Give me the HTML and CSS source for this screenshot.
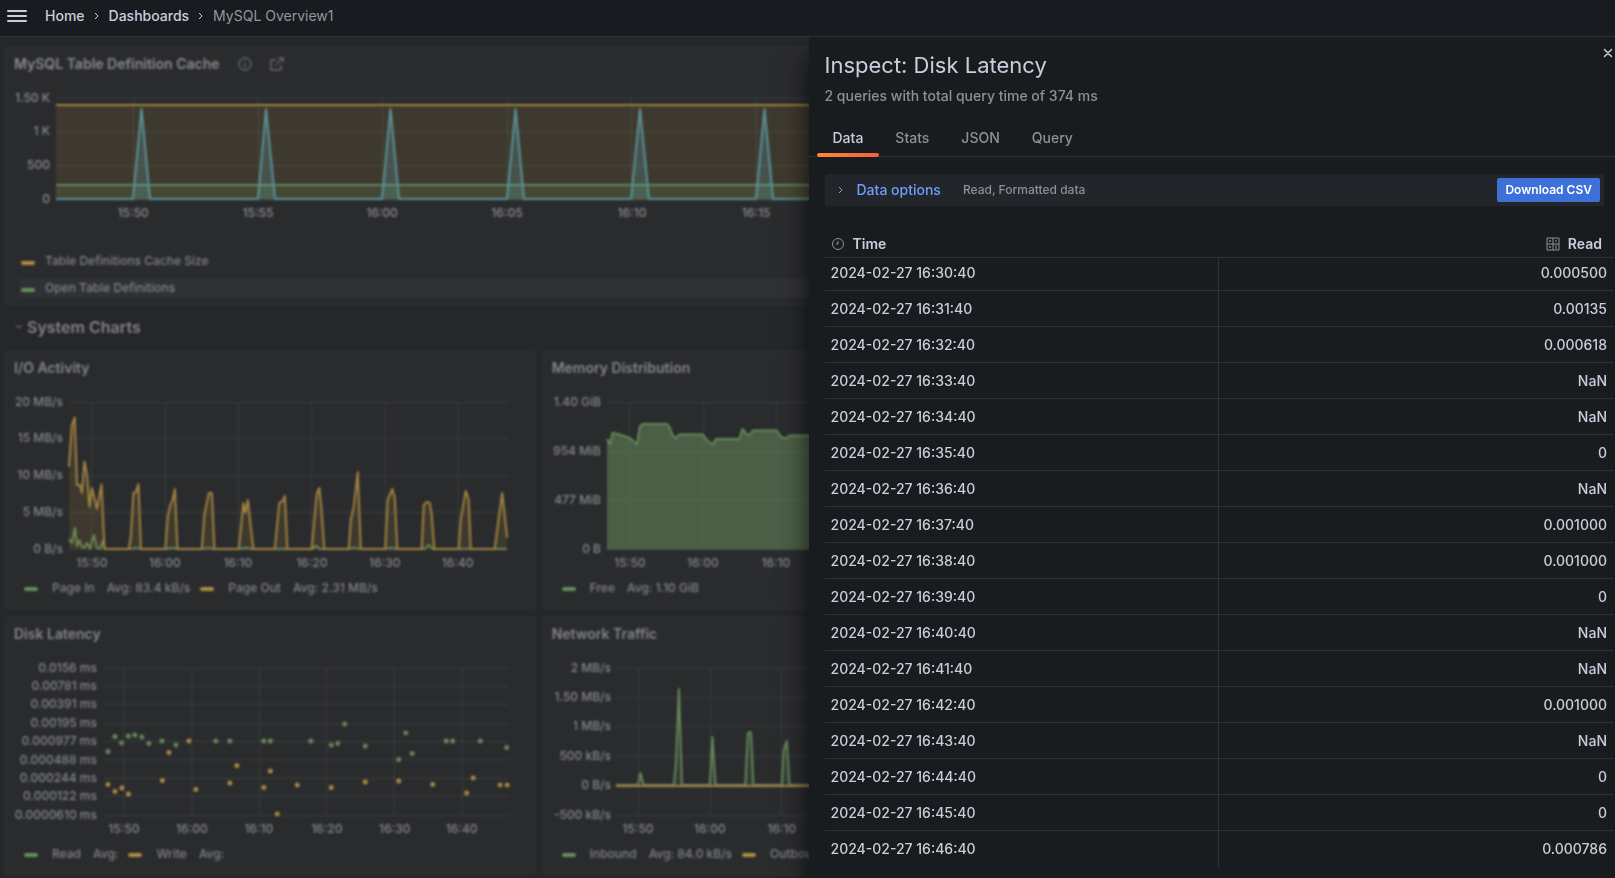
FILE: index.html
```html
<!DOCTYPE html>
<html lang="en">
<head>
<meta charset="utf-8">
<title>MySQL Overview1</title>
<link rel="stylesheet" href="styles.css">
</head>
<body>
<header class="topbar">
  <button class="menu" type="button" aria-label="Menu">
    <svg width="20" height="12" viewBox="0 0 20 12"><path d="M1 1h18M1 6h18M1 11h18" stroke="currentColor" stroke-width="2" stroke-linecap="round"/></svg>
  </button>
  <nav class="crumbs" aria-label="Breadcrumb">
    <a href="#">Home</a>
    <svg width="6" height="8" viewBox="0 0 6 8"><path d="M1 1l3 3-3 3" class="chev"/></svg>
    <a href="#">Dashboards</a>
    <svg width="6" height="8" viewBox="0 0 6 8"><path d="M1 1l3 3-3 3" class="chev"/></svg>
    <span class="current">MySQL Overview1</span>
  </nav>
</header>

<main class="stage">
  <div class="dashboard">
    <section class="panel wide">
      <div class="panel-head">
        <h2>MySQL Table Definition Cache</h2>
        <svg width="14" height="14" viewBox="0 0 14 14"><circle cx="7" cy="7" r="6" class="ico"/><path d="M7 6.500v3.500M7 4v1" class="ico"/></svg>
        <svg width="14" height="14" viewBox="0 0 14 14"><path d="M6 3H1v10h10V8M5.500 8.500L13 1M8.500 1H13v4.500" class="ico"/></svg>
      </div>
      <svg class="chart" viewBox="6 82 1603 140">
        <path class="grid" d="M56 98.500H1595M56 131.500H1595M56 165.500H1595M56 199.500H1595M133.500 98V199M258.500 98V199M382.500 98V199M507.500 98V199M631.500 98V199M756.500 98V199"/>
        <path class="area-y" d="M56 105H1595V200H56z"/>
        <path class="area-g" d="M56 185H1595V200H56z"/>
        <path class="line-y" d="M56 105H1595"/>
        <path class="line-g" d="M56 185H1595"/>
        <path class="area-b" d="M133 199L141.500 109L150 199zM258 199L266 109L275 199zM382 199L390.500 109L399 199zM507 199L515.500 109L524 199zM631 199L640 109L649 199zM756 199L764.500 109L773 199z"/>
        <path class="line-b" d="M56 199H133L141.500 109L150 199H258L266 109L275 199H382L390.500 109L399 199H507L515.500 109L524 199H631L640 109L649 199H756L764.500 109L773 199H1595"/>
        <g class="ylab"><text x="50" y="102">1.50 K</text><text x="50" y="135">1 K</text><text x="50" y="169">500</text><text x="50" y="203">0</text></g>
        <g class="xlab"><text x="133" y="217">15:50</text><text x="258" y="217">15:55</text><text x="382" y="217">16:00</text><text x="507" y="217">16:05</text><text x="632" y="217">16:10</text><text x="756" y="217">16:15</text></g>
      </svg>
      <ul class="legend-list">
        <li><i class="swatch yellow"></i>Table Definitions Cache Size</li>
        <li class="hover"><i class="swatch green"></i>Open Table Definitions</li>
      </ul>
    </section>

    <h1 class="row-title"><svg width="8" height="6" viewBox="0 0 8 6"><path d="M1 1l3 3 3-3" class="chev"/></svg>System Charts</h1>

    <section class="panel">
      <div class="panel-head"><h2>I/O Activity</h2></div>
      <svg class="chart" viewBox="6 386 528 186">
        <path class="grid" d="M69 402.500H509M69 438.500H509M69 475.500H509M69 512.500H509M69 549.500H509M91.500 402V549M165.500 402V549M238.500 402V549M311.500 402V549M385.500 402V549M458.500 402V549"/>
        <path class="line-g" d="M69 539L72 543L75 528L77 546L79.500 540.500L82 547L84.500 548L87 543L90 549L94 535L97 548L100 549L103 541L105 549H130L136 548L141 549H166L172 548L178 549H202L208 548L214 549H239L246 548L253 549H312L316.500 546L320 549H349L354 548L361 549H385L391 548L397 549H425L429 545L433 549H507"/>
        <path class="area-y" d="M69 549L69 467L72 425L74.700 417.500L77 485L80 485L82 493L84.500 461.500L87 475L89.500 507L92 488L97 509L101.500 484.500L104.500 549H129L131 536L133.500 493.500L136 492L138.500 484L141 549H165.500L168 516L170.500 505L172.500 501L175 489L177.500 549H202L204.500 515L209 493H212L214.500 549H239L243.500 503L245.500 513L248 500L251 528L253.500 549H275L279.500 503L283 501L285 496L287.500 549H312L315 515L317 494L319.500 488L321.500 508L324.500 549H349L351 520L354 507L358 472L361 549H385.500L388 500L392.500 489L395 498L397.500 549H422L424 505L427 502L430 503L432 515L434.500 549H459L461 520L466 491L469 500L471 549H495L502.500 493L507.500 538V549z"/>
        <path class="line-y" d="M69 467L72 425L74.700 417.500L77 485L80 485L82 493L84.500 461.500L87 475L89.500 507L92 488L97 509L101.500 484.500L104.500 549H129L131 536L133.500 493.500L136 492L138.500 484L141 549H165.500L168 516L170.500 505L172.500 501L175 489L177.500 549H202L204.500 515L209 493H212L214.500 549H239L243.500 503L245.500 513L248 500L251 528L253.500 549H275L279.500 503L283 501L285 496L287.500 549H312L315 515L317 494L319.500 488L321.500 508L324.500 549H349L351 520L354 507L358 472L361 549H385.500L388 500L392.500 489L395 498L397.500 549H422L424 505L427 502L430 503L432 515L434.500 549H459L461 520L466 491L469 500L471 549H495L502.500 493L507.500 538"/>
        <g class="ylab"><text x="63" y="406">20 MB/s</text><text x="63" y="442">15 MB/s</text><text x="63" y="479">10 MB/s</text><text x="63" y="516">5 MB/s</text><text x="63" y="553">0 B/s</text></g>
        <g class="xlab"><text x="92" y="567">15:50</text><text x="165" y="567">16:00</text><text x="238" y="567">16:10</text><text x="312" y="567">16:20</text><text x="385" y="567">16:30</text><text x="458" y="567">16:40</text></g>
      </svg>
      <div class="legend">
        <span class="key"><i class="swatch green"></i>Page In</span><span class="avg">Avg: 83.4 kB/s</span>
        <span class="key"><i class="swatch yellow"></i>Page Out</span><span class="avg">Avg: 2.31 MB/s</span>
      </div>
    </section>

    <section class="panel second">
      <div class="panel-head"><h2>Memory Distribution</h2></div>
      <svg class="chart" viewBox="544 386 528 186">
        <path class="grid" d="M607 402.500H1047M607 451.500H1047M607 500.500H1047M607 549.500H1047M629.500 402V549M703.500 402V549M776.500 402V549"/>
        <path class="area-mem" d="M607 549.500V439L610 444L612.500 433L618 434L630 438L637 444.500L640 426L643 424H667L670 428L672 434L676 439L679 434.500H703L707 440L713 445L716 439H739.500L742.500 429L747 434.500L750 435L753 430.500H777L781 437L786 438.500L790 435.500H1047V549.500z"/>
        <path class="line-g" d="M607 439L610 444L612.500 433L618 434L630 438L637 444.500L640 426L643 424H667L670 428L672 434L676 439L679 434.500H703L707 440L713 445L716 439H739.500L742.500 429L747 434.500L750 435L753 430.500H777L781 437L786 438.500L790 435.500H1047"/>
        <g class="ylab"><text x="601" y="406">1.40 GiB</text><text x="601" y="455">954 MiB</text><text x="601" y="504">477 MiB</text><text x="601" y="553">0 B</text></g>
        <g class="xlab"><text x="630" y="567">15:50</text><text x="703" y="567">16:00</text><text x="776" y="567">16:10</text></g>
      </svg>
      <div class="legend"><span class="key"><i class="swatch green"></i>Free</span><span class="avg">Avg: 1.10 GiB</span></div>
    </section>

    <section class="panel">
      <div class="panel-head"><h2>Disk Latency</h2></div>
      <svg class="chart" viewBox="6 652 528 186">
        <path class="grid" d="M104 668.500H509M104 686.500H509M104 704.500H509M104 723.500H509M104 741.500H509M104 759.500H509M104 778.500H509M104 796.500H509M104 815.500H509M123.500 668V815M191.500 668V815M259.500 668V815M326.500 668V815M394.500 668V815M462.500 668V815"/>
        <path class="dots-g" d="M108 751.500h0M115 736.500h0M121.500 743h0M128.500 736h0M135 735h0M142 737h0M149 743.500h0M162 741h0M176 745h0M216 741h0M230 741h0M264 741h0M270.500 741h0M311 741h0M331.500 745h0M338 743.500h0M345 724h0M365.500 746h0M399 759.500h0M406 733h0M412.500 753.500h0M446.500 741h0M453 741h0M480.500 741h0M507 747.500h0"/>
        <path class="dots-y" d="M108 784.500h0M115 791.500h0M122 788h0M128.500 794h0M162.500 780.500h0M169 752.500h0M189 741h0M196 789.500h0M230 783h0M237 765.500h0M264 787.500h0M270.500 771h0M277.500 814h0M297.500 785h0M331.500 787.500h0M365.500 782h0M399 781h0M433 784.500h0M467 793h0M473.500 778h0M500.500 785h0M507.500 785h0"/>
        <g class="ylab"><text x="97" y="672">0.0156 ms</text><text x="97" y="690">0.00781 ms</text><text x="97" y="708">0.00391 ms</text><text x="97" y="727">0.00195 ms</text><text x="97" y="745">0.000977 ms</text><text x="97" y="764">0.000488 ms</text><text x="97" y="782">0.000244 ms</text><text x="97" y="800">0.000122 ms</text><text x="97" y="819">0.0000610 ms</text></g>
        <g class="xlab"><text x="124" y="833">15:50</text><text x="192" y="833">16:00</text><text x="259" y="833">16:10</text><text x="327" y="833">16:20</text><text x="395" y="833">16:30</text><text x="462" y="833">16:40</text></g>
      </svg>
      <div class="legend">
        <span class="key"><i class="swatch green"></i>Read</span><span class="avg">Avg:</span>
        <span class="key"><i class="swatch yellow"></i>Write</span><span class="avg">Avg:</span>
      </div>
    </section>

    <section class="panel second">
      <div class="panel-head"><h2>Network Traffic</h2></div>
      <svg class="chart" viewBox="544 652 528 186">
        <path class="grid" d="M616 668.500H1047M616 697.500H1047M616 726.500H1047M616 756.500H1047M616 785.500H1047M616 815.500H1047M638.500 668V815M710.500 668V815M781.500 668V815"/>
        <path class="area-g" d="M638 785L640.500 773L643.500 785zM674 785L676 764L679 689L682 785zM710 785L712.500 737L715.500 785zM745.500 785L748 733L751 732L753.500 785zM782 785L784 750L787 741L789.500 785z"/>
        <path class="line-g" d="M616 785H638L640.500 773L643.500 785H674L676 764L679 689L682 785H710L712.500 737L715.500 785H745.500L748 733L751 732L753.500 785H782L784 750L787 741L789.500 785H1047"/>
        <path class="line-y" d="M616 786H1047"/>
        <g class="ylab"><text x="611" y="672">2 MB/s</text><text x="611" y="701">1.50 MB/s</text><text x="611" y="730">1 MB/s</text><text x="611" y="760">500 kB/s</text><text x="611" y="789">0 B/s</text><text x="611" y="819">-500 kB/s</text></g>
        <g class="xlab"><text x="638" y="833">15:50</text><text x="710" y="833">16:00</text><text x="782" y="833">16:10</text></g>
      </svg>
      <div class="legend">
        <span class="key"><i class="swatch green"></i>Inbound</span><span class="avg">Avg: 84.0 kB/s</span>
        <span class="key"><i class="swatch yellow"></i>Outbound</span>
      </div>
    </section>
  </div>

  <aside class="drawer" aria-labelledby="drawer-title">
    <button class="close" type="button" aria-label="Close"><svg width="10" height="10" viewBox="0 0 10 10"><path d="M1.500 1.500l7 7M8.500 1.500l-7 7" stroke="currentColor" stroke-width="1.500" stroke-linecap="round"/></svg></button>
    <h2 class="title" id="drawer-title">Inspect: Disk Latency</h2>
    <p class="subtitle">2 queries with total query time of 374 ms</p>
    <div class="tabs" role="tablist">
      <button class="tab active" type="button" role="tab" aria-selected="true">Data</button>
      <button class="tab" type="button" role="tab">Stats</button>
      <button class="tab" type="button" role="tab">JSON</button>
      <button class="tab" type="button" role="tab">Query</button>
    </div>
    <div class="options">
      <button class="toggle" type="button"><svg width="6" height="8" viewBox="0 0 6 8"><path d="M1 1l3 3-3 3" class="chev"/></svg>Data options</button>
      <span class="summary">Read, Formatted data</span>
      <button class="download" type="button">Download CSV</button>
    </div>
    <table class="data">
      <thead>
        <tr>
          <th scope="col"><span class="th"><svg width="14" height="14" viewBox="0 0 14 14"><circle cx="7" cy="7" r="5.500" class="ico"/><path d="M7 4v3H5" class="ico"/></svg>Time</span></th>
          <th scope="col"><span class="th end"><svg width="14" height="14" viewBox="0 0 14 14"><path d="M1 1h12v12H1zM7 1v12M1 7h12M3 4h2M4 3v2M9 4h2M3.300 9.300l1.400 1.400M4.700 9.300l-1.400 1.400M9 9h2M9 11h2" class="ico"/></svg>Read</span></th>
        </tr>
      </thead>
      <tbody>
        <tr><td>2024-02-27 16:30:40</td><td>0.000500</td></tr>
        <tr><td>2024-02-27 16:31:40</td><td>0.00135</td></tr>
        <tr><td>2024-02-27 16:32:40</td><td>0.000618</td></tr>
        <tr><td>2024-02-27 16:33:40</td><td>NaN</td></tr>
        <tr><td>2024-02-27 16:34:40</td><td>NaN</td></tr>
        <tr><td>2024-02-27 16:35:40</td><td>0</td></tr>
        <tr><td>2024-02-27 16:36:40</td><td>NaN</td></tr>
        <tr><td>2024-02-27 16:37:40</td><td>0.001000</td></tr>
        <tr><td>2024-02-27 16:38:40</td><td>0.001000</td></tr>
        <tr><td>2024-02-27 16:39:40</td><td>0</td></tr>
        <tr><td>2024-02-27 16:40:40</td><td>NaN</td></tr>
        <tr><td>2024-02-27 16:41:40</td><td>NaN</td></tr>
        <tr><td>2024-02-27 16:42:40</td><td>0.001000</td></tr>
        <tr><td>2024-02-27 16:43:40</td><td>NaN</td></tr>
        <tr><td>2024-02-27 16:44:40</td><td>0</td></tr>
        <tr><td>2024-02-27 16:45:40</td><td>0</td></tr>
        <tr><td>2024-02-27 16:46:40</td><td>0.000786</td></tr>
      </tbody>
    </table>
  </aside>
</main>
</body>
</html>
```

FILE: styles.css
```css
* { box-sizing: border-box; }

body {
  margin: 0;
  height: 100vh;
  display: flex;
  flex-direction: column;
  overflow: hidden;
  background: #262729;
  color: #ccccdc;
  font: 14px/22px Inter, "Liberation Sans", sans-serif;
}

button {
  padding: 0;
  border: 0;
  background: none;
  color: inherit;
  font: inherit;
  cursor: pointer;
}

h1, h2, p, ul { margin: 0; padding: 0; }
svg { display: block; fill: none; }
.chev, .ico { stroke: currentColor; fill: none; }

/* Top bar */
.topbar {
  flex: none;
  display: flex;
  align-items: center;
  gap: 18px;
  padding: 0 7px 4px;
  height: 37px;
  background: #181b1f;
  border-bottom: 1px solid #2e3034;
  position: relative;
  z-index: 2;
}
.crumbs { display: flex; align-items: center; gap: 9px; font-weight: 500; }
.crumbs a { color: #ccccdc; text-decoration: none; }
.crumbs .current { color: #96969f; font-weight: 400; }

/* Dashboard behind the drawer */
.stage { flex: 1; min-height: 0; position: relative; overflow: hidden; }
.dashboard {
  display: grid;
  grid-template-columns: repeat(3, minmax(0, 1fr));
  gap: 8px;
  padding: 10px 5px;
  color: #838489;
  filter: blur(1px);
}
.panel { background: #2a2b2d; border: 1px solid #303133; border-radius: 2px; grid-column: 1; }
.panel.second { grid-column: 2; }
.panel.wide { grid-column: 1 / -1; }
.panel-head { display: flex; align-items: center; gap: 18px; height: 34px; padding: 0 8px 2px; color: #85868b; }
.panel-head h2 { font-size: 14px; line-height: 22px; font-weight: 600; }
.row-title {
  grid-column: 1 / -1;
  display: flex;
  align-items: center;
  gap: 4px;
  height: 30px;
  padding: 0 0 2px 10px;
  font-size: 16px;
  font-weight: 600;
}

.chart { width: 100%; height: auto; }
.chart text { font-size: 12px; fill: #86878c; font-weight: 500; }
.ylab { text-anchor: end; }
.xlab { text-anchor: middle; }
.grid { stroke: #3c3d3f; }
.area-y { fill: #b48a34; fill-opacity: .15; }
.area-g { fill: #73a35f; fill-opacity: .15; }
.area-b { fill: #5fa3ab; fill-opacity: .25; }
.area-mem { fill: #6c925f; fill-opacity: .5; }
.line-y, .line-g, .line-b { stroke-width: 2; stroke-linejoin: round; }
.line-y { stroke: #a38340; }
.line-g { stroke: #64885a; }
.line-b { stroke: #5b929a; }
.dots-g, .dots-y { stroke-width: 5; stroke-linecap: round; }
.dots-g { stroke: #64885a; }
.dots-y { stroke: #a98843; }

.swatch { flex: none; width: 14px; height: 4px; margin-top: 3px; border-radius: 2px; }
.swatch.green { background: #668f5b; }
.swatch.yellow { background: #b08d42; }
.legend {
  display: flex;
  align-items: center;
  height: 36px;
  padding: 0 0 4px 18px;
  font-size: 12px;
  font-weight: 500;
}
.key { display: flex; align-items: center; gap: 14px; margin-right: 12px; }
.avg { margin-right: 10px; }
.legend-list {
  display: grid;
  gap: 7px;
  padding: 29px 8px 6px 13px;
  list-style: none;
  font-size: 12px;
  font-weight: 500;
  line-height: 20px;
}
.legend-list li { display: flex; align-items: center; gap: 10px; padding-left: 2px; }
.legend-list .hover { background: #303135; }

/* Inspect drawer */
.drawer {
  position: absolute;
  top: 0;
  right: 0;
  bottom: 0;
  width: calc(50% - 1px);
  padding: 15px 2px 0 16px;
  background: #191c1f;
  box-shadow: 0 20px 24px rgba(0, 0, 0, .75);
}
.close { position: absolute; top: 11px; right: 2px; }
.title { font-size: 22px; line-height: 26px; font-weight: 400; }
.subtitle { margin-top: 7px; color: #8e8f99; font-weight: 500; }
.tabs {
  display: flex;
  margin: 14px -2px 0 -16px;
  padding-left: 8px;
  border-bottom: 1px solid #2f3236;
}
.tab { position: relative; padding: 6px 16px 8px; height: 35px; color: #8e8f99; font-weight: 500; }
.tab.active { color: #ccccdc; }
.tab.active::after {
  content: "";
  position: absolute;
  left: 0;
  right: 0;
  bottom: -1px;
  height: 4px;
  border-radius: 2px;
  background: linear-gradient(90deg, #ff8833, #f55f3e);
}
.options {
  display: flex;
  align-items: center;
  height: 32px;
  margin: 17px 9px 20px 0;
  padding: 0 4px 0 13px;
  border-radius: 2px;
  background: #22252a;
}
.toggle { display: flex; align-items: center; gap: 13px; color: #6e9fff; font-weight: 500; }
.toggle svg { color: #9c9ca8; }
.summary { margin-left: 22px; font-size: 12px; font-weight: 500; color: #8e8f99; }
.download {
  height: 24px;
  margin-left: auto;
  padding: 0 8px;
  border-radius: 2px;
  background: #3d71d9;
  color: #fff;
  font-size: 12px;
  font-weight: 600;
}

.data { width: 100%; table-layout: fixed; border-collapse: separate; border-spacing: 0; }
.data th { height: 32px; padding: 4px 11px 0 6px; border-bottom: 1px solid #303336; font-weight: 600; }
.th { display: flex; align-items: center; gap: 8px; }
.th.end { justify-content: flex-end; }
.th svg { color: #8e8f99; }
.data td { height: 36px; padding: 0 6px; border-bottom: 1px solid #303336; font-weight: 500; }
.data td:first-child { border-right: 1px solid #303336; }
.data td:last-child { text-align: right; }
.data tbody tr:first-child td { height: 33px; padding-bottom: 3px; }
.data tbody tr:last-child td { border-bottom: 0; }
```
